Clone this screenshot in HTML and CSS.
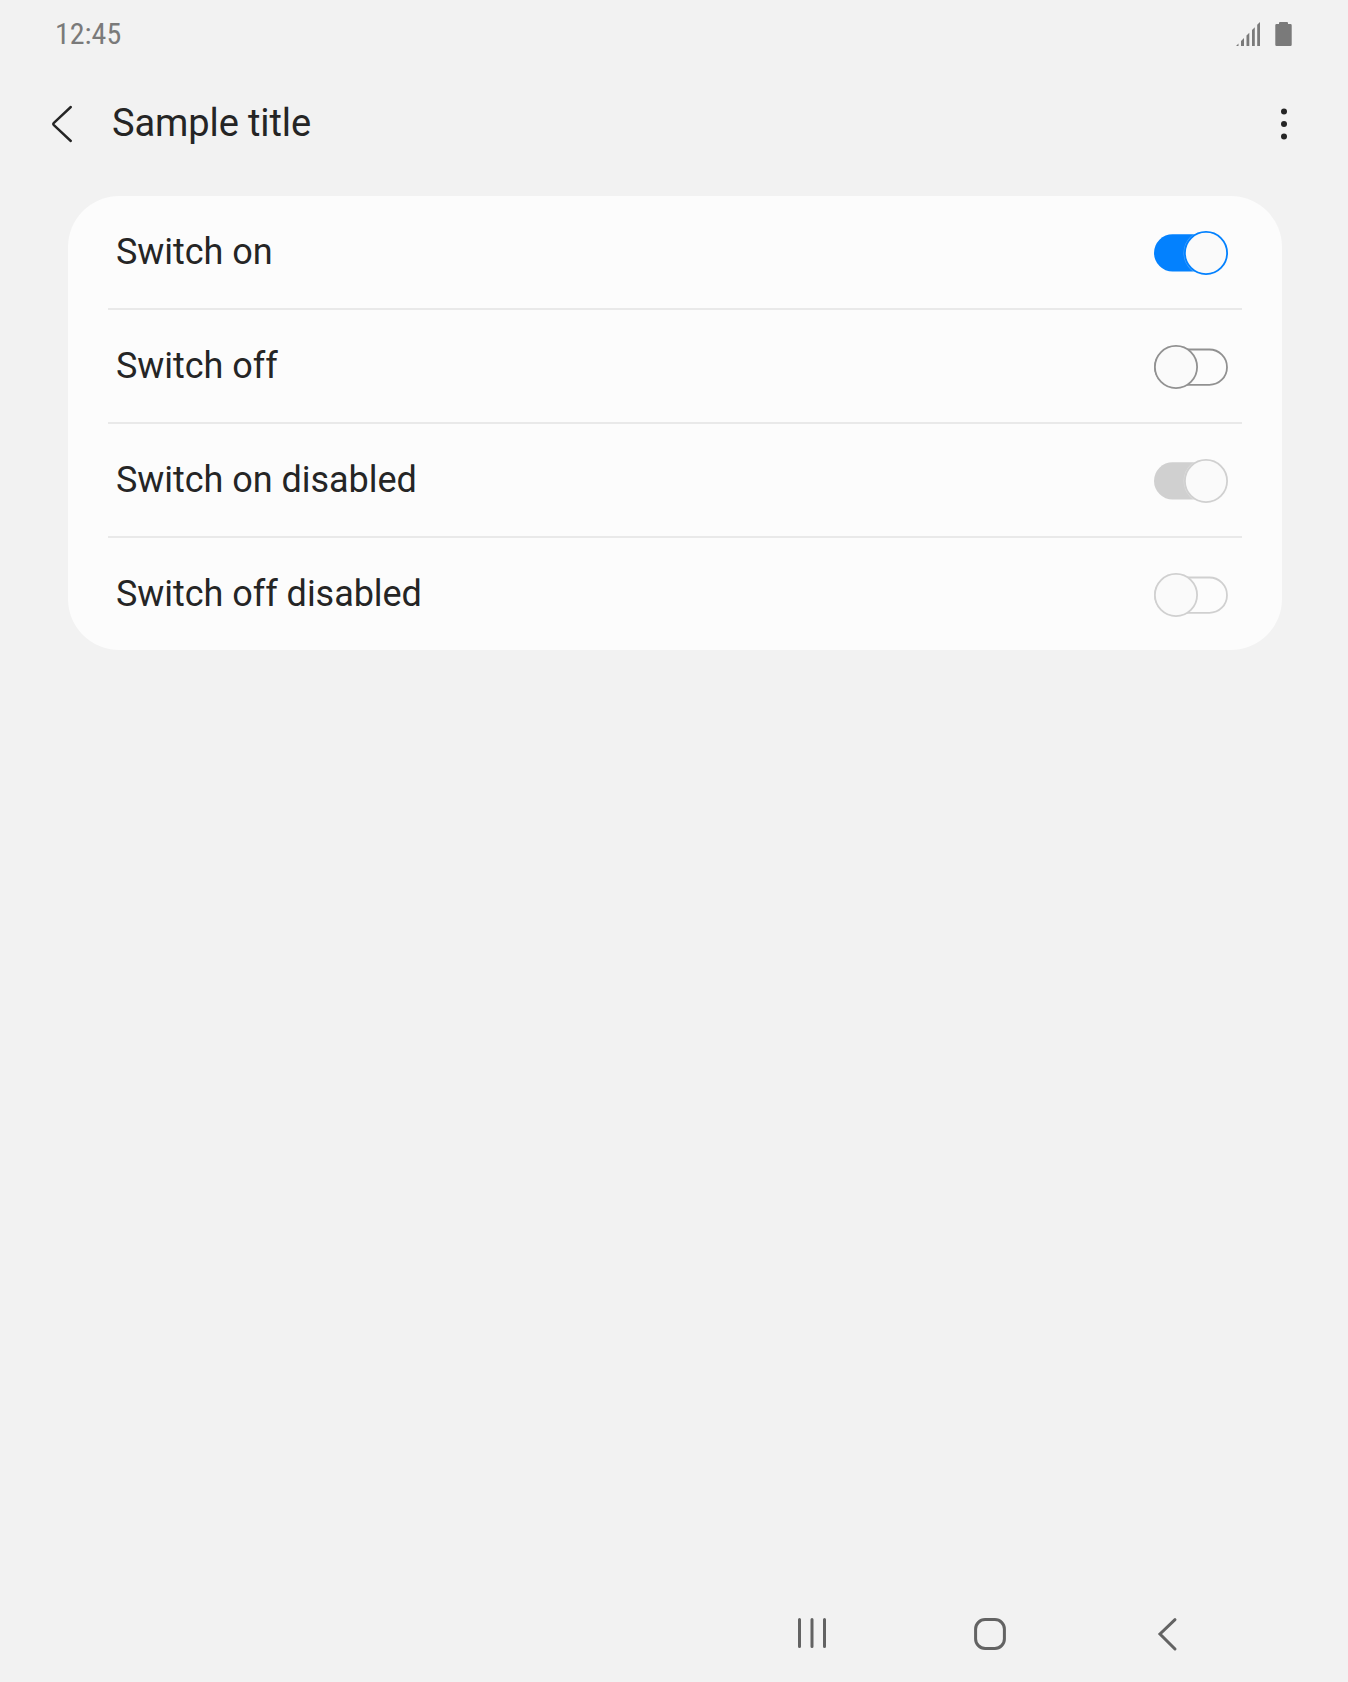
FILE: index.html
```html
<!DOCTYPE html>
<html lang="en">
<head>
<meta charset="utf-8">
<title>Sample title</title>
<link rel="stylesheet" href="styles.css">
</head>
<body>
<div class="screen">
  <div class="status">
    <span class="clock">12:45</span>
    <svg class="signal" width="24" height="24" viewBox="0 0 24 24"><path d="M0 24L2.5 21.5V24ZM5 24V19L8 16V24ZM10.5 24V13.5L13.3 10.7V24ZM16 24V8L18.8 5.2V24ZM21.2 24V2.8L24 0V24Z"/></svg>
    <svg class="battery" width="17" height="24" viewBox="0 0 17 24"><path d="M5 0H12Q13 0 13 1V2H15.5Q16.7 2 16.7 3.2V22.8Q16.7 24 15.5 24H1.5Q.3 24 .3 22.8V3.2Q.3 2 1.5 2H4V1Q4 0 5 0Z"/></svg>
  </div>
  <header class="bar">
    <svg class="back" width="24" height="40" viewBox="0 0 24 40"><path d="M20.8 3L3.9 18.8Q2.7 20 3.9 21.2L20.8 37"/></svg>
    <h1 class="title">Sample title</h1>
    <svg class="more" width="8" height="32" viewBox="0 0 8 32"><circle cx="4" cy="3.5" r="3"/><circle cx="4" cy="16" r="3"/><circle cx="4" cy="28.5" r="3"/></svg>
  </header>
  <main class="card">
    <div class="row">
      <span class="label">Switch on</span>
      <svg class="switch on" width="74" height="44" viewBox="0 0 74 44"><rect class="track" x="0" y="3.2" width="73" height="37.4" rx="18.7"/><circle class="halo" cx="52" cy="22" r="21.7"/><circle class="thumb" cx="52" cy="22" r="21.1"/></svg>
    </div>
    <div class="row">
      <span class="label">Switch off</span>
      <svg class="switch off" width="74" height="44" viewBox="0 0 74 44"><rect class="track" x="1" y="4.5" width="72" height="35.4" rx="17.7"/><circle class="thumb" cx="22" cy="22" r="21.1"/></svg>
    </div>
    <div class="row">
      <span class="label">Switch on disabled</span>
      <svg class="switch on disabled" width="74" height="44" viewBox="0 0 74 44"><rect class="track" x="0" y="3.2" width="73" height="37.4" rx="18.7"/><circle class="halo" cx="52" cy="22" r="21.7"/><circle class="thumb" cx="52" cy="22" r="21.1"/></svg>
    </div>
    <div class="row">
      <span class="label">Switch off disabled</span>
      <svg class="switch off disabled" width="74" height="44" viewBox="0 0 74 44"><rect class="track" x="1" y="4.5" width="72" height="35.4" rx="17.7"/><circle class="thumb" cx="22" cy="22" r="21.1"/></svg>
    </div>
  </main>
  <nav class="nav">
    <svg width="36" height="36" viewBox="0 0 36 36"><path d="M5.5 3.5V30.5M18 3.5V30.5M30.5 3.5V30.5"/></svg>
    <svg width="36" height="36" viewBox="0 0 36 36"><rect x="3.6" y="3.6" width="28.8" height="28.8" rx="9.5"/></svg>
    <svg width="36" height="36" viewBox="0 0 36 36"><path d="M25 3.7L10 18L25 33"/></svg>
  </nav>
</div>
</body>
</html>
```
FILE: styles.css
```css
body {
  margin: 0;
  background: #f2f2f2;
  color: #252525;
  font-family: Roboto, "Liberation Sans", sans-serif;
}
.screen {
  width: 1348px;
  height: 1682px;
  display: flex;
  flex-direction: column;
}
svg {
  display: block;
  flex: none;
}
.status {
  height: 68px;
  box-sizing: border-box;
  padding: 0 56px 0 55px;
  display: flex;
  align-items: center;
  color: #7a7a7a;
}
.clock {
  font-family: "Roboto Condensed", Roboto, sans-serif;
  font-size: 30px;
  font-stretch: 75%;
  line-height: 68px;
}
.signal {
  margin-left: auto;
  fill: #7a7a7a;
}
.battery {
  margin-left: 15px;
  fill: #7a7a7a;
}
.bar {
  height: 112px;
  box-sizing: border-box;
  padding: 0 60px 0 50px;
  display: flex;
  align-items: center;
}
.back {
  fill: none;
  stroke: #252525;
  stroke-width: 2.4;
  stroke-linecap: round;
}
.title {
  margin: 0 0 2px 38px;
  font-size: 38px;
  font-weight: 400;
  line-height: 44px;
  letter-spacing: -.1px;
}
.more {
  margin-left: auto;
  fill: #252525;
}
.card {
  margin: 16px 66px 0 68px;
  padding: 0 40px;
  background: #fcfcfc;
  border-radius: 51px;
}
.row {
  height: 112px;
  padding: 0 14px 0 8px;
  display: flex;
  align-items: center;
  justify-content: space-between;
}
.row + .row {
  border-top: 2px solid #e9e9e9;
}
.label {
  font-size: 36px;
  line-height: 42px;
  letter-spacing: -.04px;
}
.switch {
  margin-top: 2px;
  color: #919191;
}
.switch.on {
  color: #0381fe;
}
.switch.disabled {
  color: #d0d0d0;
}
.track {
  fill: none;
  stroke: currentColor;
  stroke-width: 1.8;
}
.on .track {
  fill: currentColor;
  stroke: none;
}
.halo {
  fill: none;
  stroke: #fcfcfc;
  stroke-opacity: .3;
  stroke-width: 1.6;
}
.thumb {
  fill: #fafafa;
  stroke: currentColor;
  stroke-width: 1.8;
}
.nav {
  margin-top: auto;
  height: 96px;
  padding: 0 162px 0 794px;
  display: flex;
  align-items: center;
  justify-content: space-between;
  fill: none;
  stroke: #636363;
  stroke-width: 3;
  stroke-linecap: round;
}
```
